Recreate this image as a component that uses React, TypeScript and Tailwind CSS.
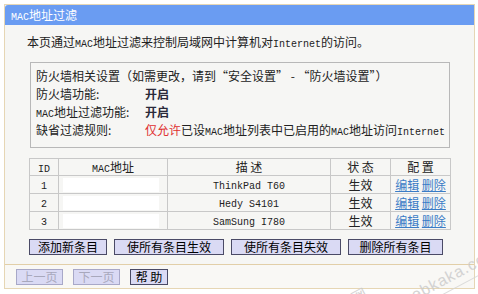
const CJK = "'Noto Sans CJK SC', 'Noto Sans', sans-serif";

function L({ children }: { children: React.ReactNode }) {
  return <span className="font-['Liberation_Mono',monospace] text-[10px] leading-none">{children}</span>;
}

const rows = [
  { id: "1", desc: "ThinkPad T60" },
  { id: "2", desc: "Hedy S4101" },
  { id: "3", desc: "SamSung I780" },
];

function Btn({ children, w, disabled }: { children: React.ReactNode; w: string; disabled?: boolean }) {
  return (
    <button
      className={`${w} flex h-[16px] items-center justify-center border bg-[#dadaf4] text-[12px] leading-none ${
        disabled ? "border-[#a8a8c8] text-[#a8a8bc]" : "border-[#4a4a66] text-black"
      }`}
    >
      {children}
    </button>
  );
}

export default function App() {
  return (
    <div className="relative h-[294px] w-[478px] overflow-hidden bg-white text-[12px] text-[#222]" style={{ fontFamily: CJK }}>
      <div className="ml-[4px] mt-[4px] w-[471px] border border-[#e6d6b4] bg-[#f6f6f4]">
        <div className="h-[20px] rounded-tl-[3px] bg-[#6a9cf2] pl-[6px] text-[12px] leading-[20px] text-white">
          <L>MAC</L>地址过滤
        </div>

        <div className="mt-[8px] h-[18px] pl-[22px] leading-[18px]">
          本页通过<L>MAC</L>地址过滤来控制局域网中计算机对<L>Internet</L>的访问。
        </div>

        <div className="ml-[25px] mt-[11px] w-[420px] border border-[#b8b8b8] pb-[8px] pl-[5px] pt-[4px] leading-[18px]">
          <div className="h-[18px]">防火墙相关设置（如需更改，请到“安全设置” - “防火墙设置”）</div>
          <div className="flex h-[18px]">
            <span className="w-[109px]">防火墙功能:</span>
            <span className="font-bold text-[#2a2a3a]">开启</span>
          </div>
          <div className="flex h-[18px]">
            <span className="w-[109px]">
              <L>MAC</L>地址过滤功能:
            </span>
            <span className="font-bold text-[#2a2a3a]">开启</span>
          </div>
          <div className="flex h-[18px]">
            <span className="w-[109px]">缺省过滤规则:</span>
            <span>
              <span className="text-[#e03030]">仅允许</span>已设<L>MAC</L>地址列表中已启用的<L>MAC</L>地址访问<L>Internet</L>
            </span>
          </div>
        </div>

        <table className="ml-[24px] mt-[10px] w-[422px] border-collapse border border-[#bcbcbc] text-center leading-[14px]">
          <thead>
            <tr className="h-[17px]">
              <th className="w-[29px] border border-[#c8c8c8] p-0 font-normal"><L>ID</L></th>
              <th className="w-[109px] border border-[#c8c8c8] p-0 font-normal"><L>MAC</L>地址</th>
              <th className="w-[163px] border border-[#c8c8c8] p-0 font-normal">描 述</th>
              <th className="w-[60px] border border-[#c8c8c8] p-0 font-normal">状 态</th>
              <th className="border border-[#c8c8c8] p-0 font-normal">配 置</th>
            </tr>
          </thead>
          <tbody>
            {rows.map((r) => (
              <tr key={r.id} className="h-[18px]">
                <td className="border border-[#c8c8c8] p-0"><L>{r.id}</L></td>
                <td className="border border-[#c8c8c8] px-[4px] py-0">
                  <div className="h-[14px] w-[96px] bg-white" />
                </td>
                <td className="border border-[#c8c8c8] p-0"><L>{r.desc}</L></td>
                <td className="border border-[#c8c8c8] p-0">生效</td>
                <td className="border border-[#c8c8c8] p-0 text-[#3a7cc6]">
                  <span className="underline">编辑</span> <span className="underline">删除</span>
                </td>
              </tr>
            ))}
          </tbody>
        </table>

        <div className="flex gap-[7px] pb-[9px] pl-[24px] pt-[9px]">
          <Btn w="w-[78px]">添加新条目</Btn>
          <Btn w="w-[110px]">使所有条目生效</Btn>
          <Btn w="w-[110px]">使所有条目失效</Btn>
          <Btn w="w-[95px]">删除所有条目</Btn>
        </div>

        <div className="flex h-[24px] items-start gap-[10px] border-t border-[#e2cfa8] bg-[#f9f8f5] pl-[11px] pt-[4px]">
          <Btn w="w-[47px]" disabled>上一页</Btn>
          <Btn w="w-[47px]" disabled>下一页</Btn>
          <Btn w="w-[38px]">帮 助</Btn>
        </div>
      </div>

      <div className="pointer-events-none absolute left-[350px] top-[252px] -rotate-[28deg] border-b border-[#d4d4d4] font-['Liberation_Sans',sans-serif] text-[16px] tracking-[1px] text-[#cacaca] opacity-80">
        网 www.webkaka.com
      </div>
    </div>
  );
}
